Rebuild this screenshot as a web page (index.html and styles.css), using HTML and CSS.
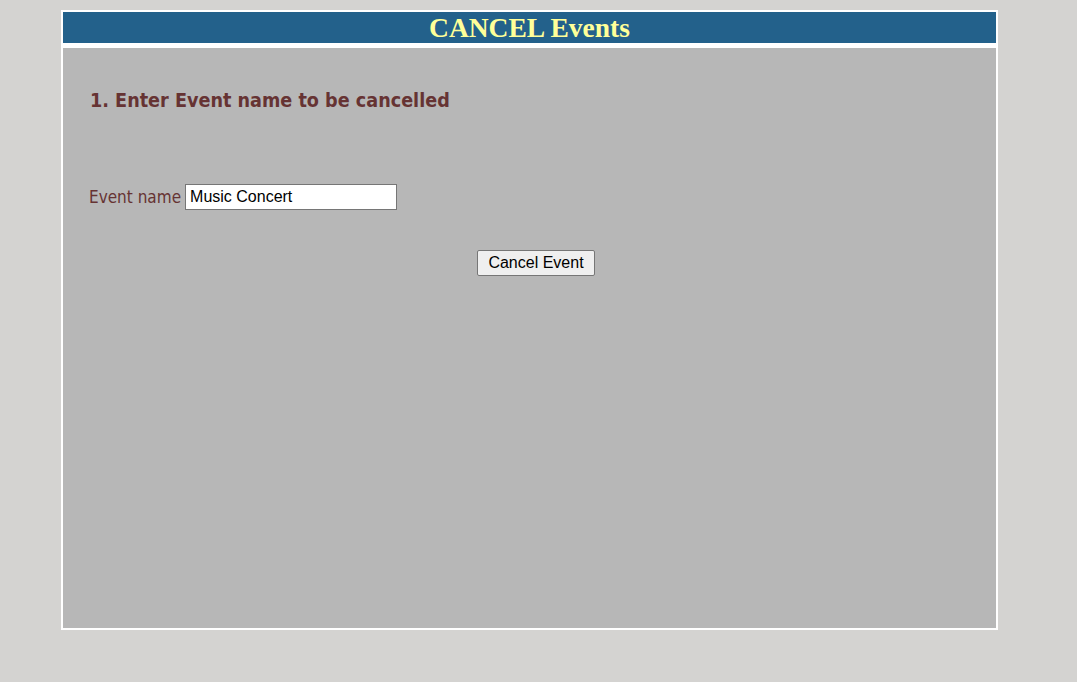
FILE: index.html
```html
<!DOCTYPE html>
<html>
<head>
<meta charset="utf-8">
<title>CANCEL Events</title>
<link rel="stylesheet" href="styles.css">
</head>
<body>
<div class="frame">
  <div class="header">CANCEL Events</div>
  <div class="panel">
    <h2 class="step">1. Enter Event name to be cancelled</h2>
    <form class="form">
      <div class="row">
        <label class="label" for="ev">Event name</label>
        <input class="field" id="ev" type="text" value="Music Concert">
      </div>
      <div class="actions">
        <button class="btn" type="button">Cancel Event</button>
      </div>
    </form>
  </div>
</div>
</body>
</html>
```
FILE: styles.css
```css
html, body {
  margin: 0;
  padding: 0;
  background: #d4d3d1;
}
body {
  padding: 10px 0 0 61px;
}
.frame {
  width: 933px;
  border: 2px solid #ffffff;
  background: #ffffff;
  display: flex;
  flex-direction: column;
  gap: 5px;
}
.header {
  height: 31px;
  background: #23618b;
  color: #ffff99;
  font-family: "Liberation Serif", "Times New Roman", serif;
  font-weight: bold;
  font-size: 27.5px;
  line-height: 31px;
  text-align: center;
}
.panel {
  height: 580px;
  background: #b7b7b7;
  padding: 0 26px;
  box-sizing: border-box;
}
.step {
  margin: 0;
  padding-left: 1px;
  padding-top: 41px;
  font-family: "DejaVu Sans Condensed", "DejaVu Sans", sans-serif;
  font-weight: bold;
  font-size: 19.6px;
  color: #663333;
  line-height: 24px;
}
.form {
  margin: 0;
}
.row {
  margin-top: 71px;
  display: flex;
  align-items: center;
  gap: 4px;
}
.label {
  font-family: "DejaVu Sans Condensed", "DejaVu Sans", sans-serif;
  font-size: 17px;
  color: #663333;
}
.field {
  width: 212px;
  height: 26px;
  box-sizing: border-box;
  border: 1px solid #767676;
  padding: 1px 4px;
  font-family: "Liberation Sans", Arial, sans-serif;
  font-size: 16px;
  color: #000;
  background: #fff;
  margin: 0;
}
.actions {
  margin-top: 40px;
  display: flex;
  justify-content: center;
  padding-left: 13px;
}
.btn {
  width: 118px;
  height: 26px;
  box-sizing: border-box;
  border: 1px solid #767676;
  border-radius: 2px;
  background: #efefef;
  font-family: "Liberation Sans", Arial, sans-serif;
  font-size: 16px;
  color: #000;
  padding: 0;
  margin: 0;
}
```
